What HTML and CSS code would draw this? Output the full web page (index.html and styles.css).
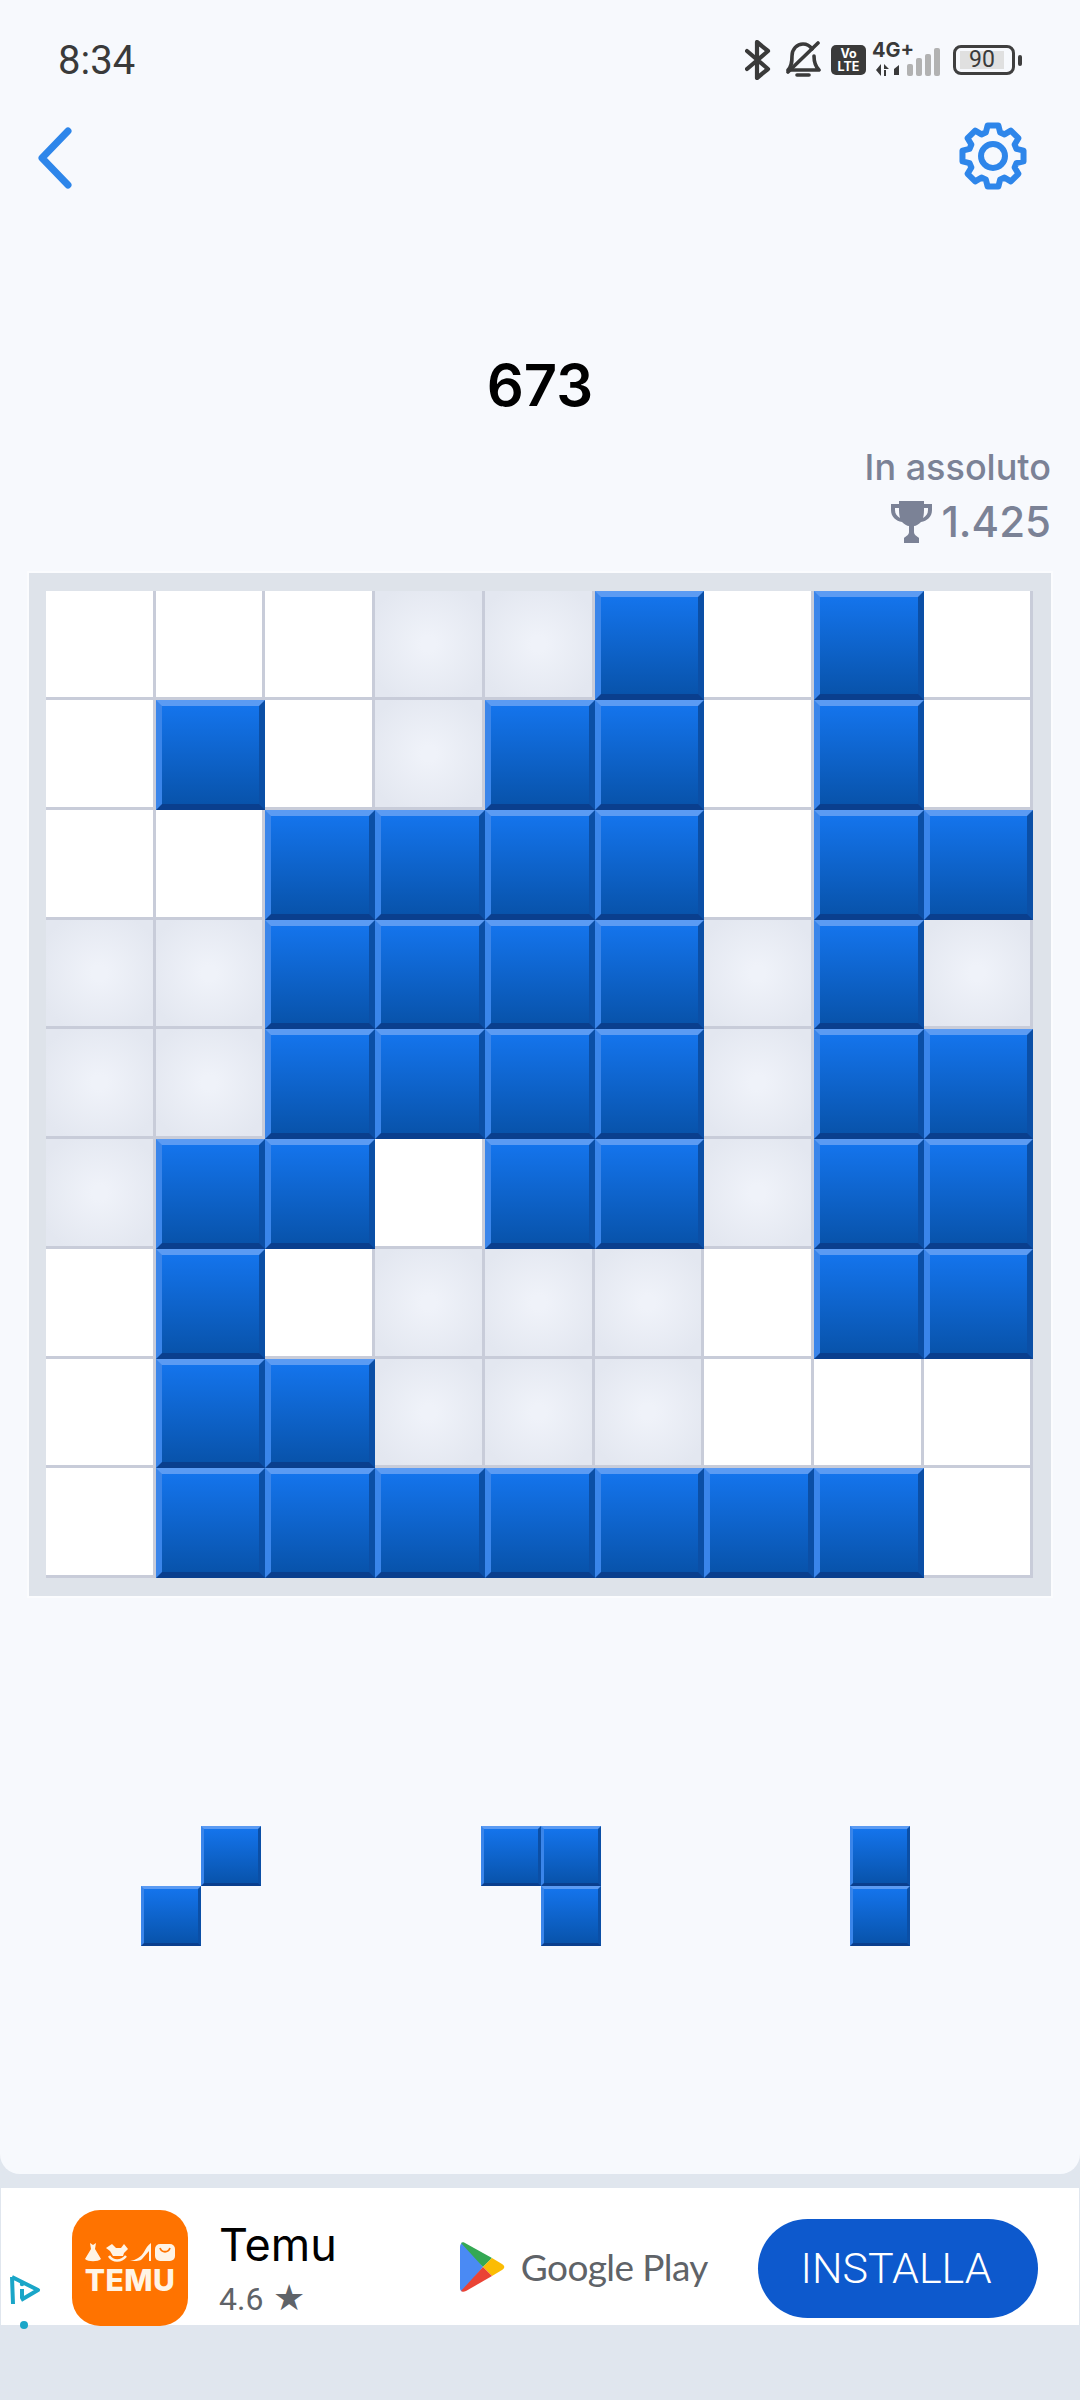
FILE: index.html
```html
<!DOCTYPE html>
<html lang="it">
  <head>
    <meta charset="UTF-8" />
    <title>Blocchi</title>
    <link rel="stylesheet" href="styles.css">
  </head>
  <body>
    <div class="panel">
      <!-- status bar -->
      <div class="status-bar">
        <span class="time">8:34</span>
        <div class="status-icons">
          <svg class="ic-bt" width="26" height="40" viewBox="0 0 26 40"><path d="M2 11 23 29 12 38V2L23 11 2 29" fill="none" stroke="#3a3a3a" stroke-width="4.2" stroke-linejoin="round" stroke-linecap="round"/></svg>
          <svg class="ic-bell" width="36" height="38" viewBox="0 0 36 38"><path d="M3 29C7 25 7 20 7 15 7 8 12 3 18 3 22 3 25 5 27 8M29 15C29 21 30 25 34 29H3M12 34H24" fill="none" stroke="#3a3a3a" stroke-width="3.6" stroke-linecap="round" stroke-linejoin="round"/><path d="M3 31 33 2" stroke="#3a3a3a" stroke-width="3.6" stroke-linecap="round"/></svg>
          <div class="volte">Vo<br>LTE</div>
          <div class="net">
            <span class="net-type">4G+</span>
            <svg class="net-arrows" width="30" height="12" viewBox="0 0 30 12"><path d="M5 0V12L0 6ZM8 0 13 5H8ZM8 6H10V12H8ZM18 5 23 1V11H18Z" fill="#3a3a3a"/></svg>
            <div class="bars">
              <i class="bar b1"></i><i class="bar b2"></i><i class="bar b3"></i><i class="bar b4"></i>
            </div>
          </div>
          <div class="battery"><span class="battery-fill">90</span></div>
          <i class="battery-nub"></i>
        </div>
      </div>

      <!-- back + settings -->
      <div class="top-nav">
        <svg class="back" width="36" height="62" viewBox="0 0 36 62"><path d="M31 4 5 31 31 58" fill="none" stroke="#2e86ea" stroke-width="7" stroke-linecap="round" stroke-linejoin="round"/></svg>
        <svg class="gear" width="70" height="70" viewBox="0 0 70 70">
          <polygon points="27.84,11.57 29.62,4.47 40.38,4.47 42.16,11.57 46.5,13.37 52.78,9.61 60.39,17.22 56.63,23.5 58.43,27.84 65.53,29.62 65.53,40.38 58.43,42.16 56.63,46.5 60.39,52.78 52.78,60.39 46.5,56.63 42.16,58.43 40.38,65.53 29.62,65.53 27.84,58.43 23.5,56.63 17.22,60.39 9.61,52.78 13.37,46.5 11.57,42.16 4.47,40.38 4.47,29.62 11.57,27.84 13.37,23.5 9.61,17.22 17.22,9.61 23.5,13.37" fill="none" stroke="#2e86ea" stroke-width="6" stroke-linejoin="round"/>
          <circle cx="35" cy="35" r="12" fill="none" stroke="#2e86ea" stroke-width="6"/>
        </svg>
      </div>

      <div class="score">673</div>

      <div class="best">
        <div class="best-label">In assoluto</div>
        <div class="best-value">
          <svg width="41" height="42" viewBox="0 0 41 42"><path d="M8 0H33V3H41V9C41 16 36 20 30 21 28 23 25 25 23 25V31C23 34 26 35 28 37V42H13V37C15 35 18 34 18 31V25C16 25 13 23 11 21 5 20 0 16 0 9V3H8ZM4 7V9C4 13 6 15 9 17 8 14 8 10 8 7ZM37 7H33C33 10 33 14 32 17 35 15 37 13 37 9Z" fill="#7b8296"/></svg>
          <span>1.425</span>
        </div>
      </div>

      <!-- griglia 9x9 -->
      <div class="board">
        <div class="grid">
          <i class="cell"></i><i class="cell"></i><i class="cell"></i><i class="cell dim"></i><i class="cell dim"></i><i class="cell on"></i><i class="cell"></i><i class="cell on"></i><i class="cell"></i>
          <i class="cell"></i><i class="cell on"></i><i class="cell"></i><i class="cell dim"></i><i class="cell on"></i><i class="cell on"></i><i class="cell"></i><i class="cell on"></i><i class="cell"></i>
          <i class="cell"></i><i class="cell"></i><i class="cell on"></i><i class="cell on"></i><i class="cell on"></i><i class="cell on"></i><i class="cell"></i><i class="cell on"></i><i class="cell on"></i>
          <i class="cell dim"></i><i class="cell dim"></i><i class="cell on"></i><i class="cell on"></i><i class="cell on"></i><i class="cell on"></i><i class="cell dim"></i><i class="cell on"></i><i class="cell dim"></i>
          <i class="cell dim"></i><i class="cell dim"></i><i class="cell on"></i><i class="cell on"></i><i class="cell on"></i><i class="cell on"></i><i class="cell dim"></i><i class="cell on"></i><i class="cell on"></i>
          <i class="cell dim"></i><i class="cell on"></i><i class="cell on"></i><i class="cell"></i><i class="cell on"></i><i class="cell on"></i><i class="cell dim"></i><i class="cell on"></i><i class="cell on"></i>
          <i class="cell"></i><i class="cell on"></i><i class="cell"></i><i class="cell dim"></i><i class="cell dim"></i><i class="cell dim"></i><i class="cell"></i><i class="cell on"></i><i class="cell on"></i>
          <i class="cell"></i><i class="cell on"></i><i class="cell on"></i><i class="cell dim"></i><i class="cell dim"></i><i class="cell dim"></i><i class="cell"></i><i class="cell"></i><i class="cell"></i>
          <i class="cell"></i><i class="cell on"></i><i class="cell on"></i><i class="cell on"></i><i class="cell on"></i><i class="cell on"></i><i class="cell on"></i><i class="cell on"></i><i class="cell"></i>
        </div>
      </div>

      <!-- pezzi -->
      <div class="tray">
        <div class="piece p-two">
          <i></i><i class="on"></i>
          <i class="on"></i><i></i>
        </div>
        <div class="piece p-two">
          <i class="on"></i><i class="on"></i>
          <i></i><i class="on"></i>
        </div>
        <div class="piece p-one">
          <i class="on"></i>
          <i class="on"></i>
        </div>
      </div>
    </div>

    <!-- banner -->
    <div class="ad">
      <div class="ad-choices">
        <svg width="32" height="33" viewBox="0 0 32 33"><path d="M3 3 29 16 12 26M4 30 3 3M13 15V24" fill="none" stroke="#1aa6c8" stroke-width="4" stroke-linejoin="round"/><circle cx="13" cy="10" r="2.2" fill="#1aa6c8"/></svg>
        <i class="ad-dot"></i>
      </div>
      <div class="temu-icon">
        <svg width="90" height="19" viewBox="0 0 90 19">
          <path d="M5 0 8 2 11 0 10 6 16 16C13 19 3 19 0 16L6 6Z" fill="#fff4e6"/>
          <path d="M21 5 27 1 31 5H36L39 1 43 6 39 10 38 13H28L25 8Z" fill="#fff4e6"/>
          <path d="M24 13C28 19 36 19 41 13" fill="none" stroke="#fff4e6" stroke-width="2.5"/>
          <path d="M45 18C51 17 56 14 59 9 61 5 63 2 66 0V18H64V8L57 16C55 18 52 18 45 18Z" fill="#fff4e6"/>
          <rect x="70" y="1" width="20" height="17" rx="5" fill="#fff4e6"/>
          <path d="M75 5C77 10 83 10 85 5" fill="none" stroke="#ff7300" stroke-width="1.8"/>
        </svg>
        <span class="temu-word">TEMU</span>
      </div>
      <div class="app-info">
        <div class="app-name">Temu</div>
        <div class="app-rating">4.6 <span class="star">★</span></div>
      </div>
      <div class="play">
        <svg width="46" height="50" viewBox="0 0 46 50">
          <path d="M1 5C1 2 3 0 5 1L24 25 4 49C2 50 1 48 1 46Z" fill="#4a8af4"/>
          <path d="M2 1C3 0 5 0 6 1L33 16 24 25Z" fill="#34a853"/>
          <path d="M33 16 43 22C46 24 46 26 43 28L33 34 24 25Z" fill="#fbbc04"/>
          <path d="M24 25 33 34 7 49C5 50 3 50 2 49Z" fill="#ea4335"/>
        </svg>
        <span class="play-word">Google Play</span>
      </div>
      <a class="install" href="javascript:;">INSTALLA</a>
    </div>
  </body>
</html>
```

FILE: styles.css
```css
* {
  margin: 0;
  padding: 0;
  box-sizing: border-box;
}

body {
  width: 1080px;
  height: 2400px;
  overflow: hidden;
  background-color: #e0e6ee;
  font-family: Inter, "Noto Sans", sans-serif;
}

i {
  display: block;
}

.panel {
  height: 2174px;
  background-color: #f7f9fd;
  border-radius: 0 0 20px 20px;
}

/* status bar */
.status-bar {
  display: flex;
  justify-content: space-between;
  align-items: center;
  height: 120px;
  padding: 0 58px 0 58px;
}

.time {
  font-family: Roboto, sans-serif;
  font-size: 40px;
  color: #3a3a3a;
}

.status-icons {
  display: flex;
  align-items: center;
}

.ic-bt {
  margin-right: 14px;
}

.ic-bell {
  margin-right: 10px;
}

.volte {
  width: 35px;
  height: 30px;
  padding-top: 2px;
  background-color: #3a3a3a;
  border-radius: 5px;
  color: #fff;
  font-size: 12.5px;
  font-weight: 700;
  line-height: 13px;
  text-align: center;
}

.net {
  position: relative;
  width: 68px;
  height: 34px;
  margin-left: 6px;
}

.net-type {
  position: absolute;
  top: -5px;
  left: 0;
  font-size: 20px;
  font-weight: 700;
  color: #3a3a3a;
}

.net-arrows {
  position: absolute;
  left: 4px;
  bottom: 1px;
}

.bars {
  position: absolute;
  right: 0;
  bottom: 1px;
  display: flex;
  align-items: flex-end;
  gap: 3px;
}

.bar {
  width: 6px;
  background-color: #b2b2b2;
  border-radius: 2px;
}

.b1 { height: 12px; }
.b2 { height: 18px; }
.b3 { height: 22px; }
.b4 { height: 28px; }

.battery {
  width: 62px;
  height: 30px;
  margin-left: 13px;
  padding: 3px 4px;
  border: 3px solid #3f3f3f;
  border-radius: 8px;
}

.battery-fill {
  display: block;
  width: 44px;
  height: 18px;
  background-color: #e0e0e0;
  font-family: Roboto, sans-serif;
  font-size: 23px;
  line-height: 18px;
  text-align: center;
  color: #3a3a3a;
}

.battery-nub {
  width: 4px;
  height: 11px;
  margin-left: 3px;
  background-color: #3f3f3f;
  border-radius: 2px;
}

/* nav */
.top-nav {
  display: flex;
  justify-content: space-between;
  align-items: center;
  height: 70px;
  padding: 0 52px 0 37px;
}

.back {
  margin-top: 6px;
}

.gear {
  margin-top: 2px;
}

.score {
  margin-top: 165px;
  font-size: 58px;
  font-weight: 600;
  line-height: 60px;
  text-align: center;
  color: #000;
}

.best {
  margin-top: 27px;
  padding-right: 29px;
  color: #7b8296;
  text-align: right;
}

.best-label {
  font-size: 36px;
  font-weight: 500;
  line-height: 50px;
}

.best-value {
  display: flex;
  justify-content: flex-end;
  align-items: center;
  gap: 9px;
  font-size: 42px;
  font-weight: 500;
  line-height: 60px;
}

/* board */
.board {
  width: 1022px;
  margin: 21px 0 0 29px;
  padding: 17.5px 17px 18px 17px;
  background-color: #dee3ea;
  box-shadow: 0 0 0 2px #fbfcfe;
}

.grid {
  display: grid;
  grid-template-columns: repeat(9, 109.72px);
  grid-template-rows: repeat(9, 109.72px);
}

.cell {
  background-color: #fff;
  border-right: 3px solid #c8ccd9;
  border-bottom: 3px solid #c8ccd9;
}

.cell.dim {
  background-image: radial-gradient(circle, #eff2f9 10%, #e3e7f0 85%);
}

.cell.on,
.piece .on {
  background-image: linear-gradient(#1474ec, #0853ab);
  border-style: solid;
  border-width: 6px;
  border-color: #5b9bf3 #0b4fa6 #0a3f8e #3a85ea;
}

/* pieces */
.tray {
  display: flex;
  margin-top: 230px;
  padding-left: 141px;
}

.piece {
  display: grid;
  grid-auto-rows: 60px;
}

.piece .on {
  border-width: 3.5px;
}

.p-two {
  grid-template-columns: repeat(2, 60px);
  margin-right: 220px;
}

.p-two + .p-two {
  margin-right: 249px;
}

.p-one {
  grid-template-columns: 60px;
}

/* ad */
.ad {
  position: relative;
  display: flex;
  align-items: center;
  height: 137px;
  margin: 14px 1px 0;
  background-color: #fff;
}

.ad-choices {
  position: absolute;
  left: 8px;
  top: 86px;
}

.ad-dot {
  width: 8px;
  height: 8px;
  margin: 10px 0 0 11px;
  background-color: #1aa6c8;
  border-radius: 50%;
}

.temu-icon {
  display: flex;
  flex-direction: column;
  align-items: center;
  justify-content: center;
  gap: 5px;
  flex: none;
  width: 116px;
  height: 116px;
  margin: 22px 0 0 71px;
  background-color: #ff7300;
  border-radius: 28px;
}

.temu-word {
  font-size: 30px;
  font-weight: 800;
  letter-spacing: 0.5px;
  line-height: 26px;
  color: #fff4e6;
}

.app-info {
  margin: 22px 0 0 31px;
}

.app-name {
  font-size: 45px;
  line-height: 54px;
  color: #000;
}

.app-rating {
  margin-top: 8px;
  font-family: Roboto, sans-serif;
  font-size: 32px;
  line-height: 38px;
  color: #5f6368;
}

.star {
  margin-left: 2px;
  font-size: 36px;
  line-height: 30px;
}

.play {
  display: flex;
  align-items: center;
  gap: 16px;
  margin-left: 122px;
  margin-top: 20px;
}

.play-word {
  font-family: Lato, sans-serif;
  font-size: 37px;
  letter-spacing: -0.6px;
  color: #5f6368;
}

.install {
  position: absolute;
  left: 757px;
  top: 31px;
  width: 280px;
  height: 99px;
  padding-right: 4px;
  background-color: #0d59cd;
  border-radius: 50px;
  font-family: Roboto, sans-serif;
  font-size: 43px;
  font-weight: 300;
  line-height: 99px;
  text-align: center;
  text-decoration: none;
  color: #fff;
}
```
